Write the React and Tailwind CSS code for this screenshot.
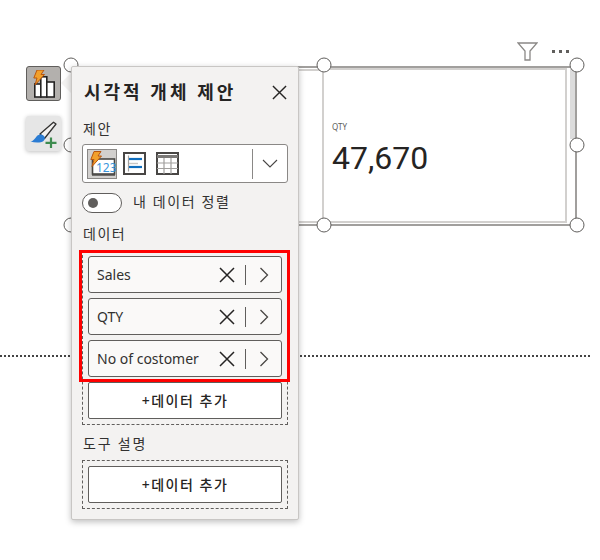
import React from "react";

const KR = { fontFamily: '"Noto Sans","Noto Sans CJK KR",sans-serif' };

function Bolt({ x = 0, y = 0 }) {
  return (
    <path
      transform={`translate(${x} ${y})`}
      d="M5 0.5H12L9 5H12.5L3 15.5L5 8.5H1.8Z"
      fill="#f2a02c"
      stroke="#b8560f"
      strokeWidth="1"
      strokeLinejoin="miter"
    />
  );
}

function BarsIcon() {
  return (
    <svg width="26" height="28" viewBox="0 0 26 28">
      <g fill="#fff" stroke="#252423" strokeWidth="1.6">
        <rect x="3.8" y="14" width="6" height="13" />
        <rect x="9.8" y="6.8" width="6" height="20.2" />
        <rect x="15.8" y="12" width="7.4" height="15" />
      </g>
      <Bolt x="1" y="-0.5" />
    </svg>
  );
}

function BrushIcon() {
  return (
    <svg width="30" height="30" viewBox="0 0 30 30">
      <path d="M11 15L24.5 3.2L27 5L15.5 19.5Z" fill="#f3f2f1" stroke="#323130" strokeWidth="1.3" strokeLinejoin="round" />
      <path d="M1.5 22.5C5 22 6 19 8 17C10 15 12.5 15 14.5 16.5C16.5 18 16 20.5 14.5 22C12 24 6 24 1.5 22.5Z" fill="#2b7cd3" />
      <path d="M22 18.5V29M16.5 23.8H27.5" stroke="#3d8b4f" strokeWidth="2.2" />
    </svg>
  );
}

function CardIcon() {
  return (
    <svg width="28" height="26" viewBox="0 0 28 26">
      <rect x="4.5" y="8" width="22" height="15" fill="#fff" stroke="#484644" strokeWidth="1.6" />
      <path d="M4 24H27" stroke="#484644" strokeWidth="1.4" />
      <text x="8" y="20.5" fontSize="12" fill="#3a96dd" fontFamily="Noto Sans, sans-serif">123</text>
      <Bolt x="1" y="0" />
    </svg>
  );
}

function SlicerIcon() {
  return (
    <svg width="23" height="23" viewBox="0 0 23 23">
      <rect x="1" y="1" width="21" height="21" fill="#fff" stroke="#484644" strokeWidth="2" />
      <path d="M5.5 3.5V19.5" stroke="#a19f9d" strokeWidth="1.2" />
      <path d="M6 7H19" stroke="#106ebe" strokeWidth="2.2" />
      <path d="M6 11.5H15" stroke="#c8c6c4" strokeWidth="1.4" />
      <path d="M6 15H19" stroke="#106ebe" strokeWidth="2.2" />
    </svg>
  );
}

function TableIcon() {
  return (
    <svg width="23" height="23" viewBox="0 0 23 23">
      <rect x="1" y="1" width="21" height="21" fill="#fff" stroke="#484644" strokeWidth="2" />
      <path d="M1 4.5H22" stroke="#7a7876" strokeWidth="3" />
      <path d="M1 11H22M1 16.5H22M8 6V22M15 6V22" stroke="#a19f9d" strokeWidth="1.2" />
    </svg>
  );
}

function Close({ size = 16, sw = 1.4 }) {
  return (
    <svg width={size} height={size} viewBox="0 0 16 16">
      <path d="M1 1L15 15M15 1L1 15" stroke="#252423" strokeWidth={sw} fill="none" />
    </svg>
  );
}

function DataRow({ label }) {
  return (
    <div className="h-[37px] rounded-[3px] border border-[#605e5c] bg-[#faf9f8] flex items-center pl-[8px] pr-[12px] text-[14px] text-[#323130]">
      <span className="flex-1">{label}</span>
      <Close size={16} sw={1.5} />
      <span className="w-px h-[20px] bg-[#605e5c] ml-[10px] mr-[13px]" />
      <svg width="10" height="16" viewBox="0 0 10 16">
        <path d="M1.5 1L8.5 8L1.5 15" stroke="#484644" strokeWidth="1.3" fill="none" />
      </svg>
    </div>
  );
}

function AddButton() {
  return (
    <div className="h-[37px] rounded-[2px] border border-[#605e5c] bg-white flex items-center justify-center text-[14px] font-medium tracking-[1.5px] text-[#252423]">
      +데이터 추가
    </div>
  );
}

function Handle({ x, y }) {
  return (
    <span
      className="absolute w-[15px] h-[15px] rounded-full bg-white border border-[#605e5c] -translate-x-1/2 -translate-y-1/2"
      style={{ left: x, top: y }}
    />
  );
}

export default function App() {
  return (
    <div className="relative w-[600px] h-[560px] bg-white overflow-hidden" style={KR}>
      {/* report divider */}
      <div className="absolute left-0 top-[355px] w-[590px] border-t-2 border-dotted border-[#444]" />

      {/* visual header */}
      <div className="absolute left-[517px] top-[42px] flex items-center gap-[14px]">
        <svg width="21" height="19" viewBox="0 0 21 19">
          <path d="M1 1H20L13 9V18H8V9Z" fill="#fff" stroke="#8a8886" strokeWidth="1.3" />
        </svg>
        <span className="flex gap-[4px]">
          <i className="w-[3px] h-[3px] bg-[#605e5c]" />
          <i className="w-[3px] h-[3px] bg-[#605e5c]" />
          <i className="w-[3px] h-[3px] bg-[#605e5c]" />
        </span>
      </div>

      {/* selected visual */}
      <div className="absolute left-[71px] top-[66px] w-[506px] h-[160px] border-2 border-[#a19f9d]" />
      <div className="absolute left-[71px] top-[69px] w-[252px] h-[154px] border-y-2 border-[#d2d0ce]" />
      <div className="absolute left-[322px] top-[68px] w-[245px] h-[155px] border-2 border-[#d2d0ce] bg-white flex flex-col justify-center pl-[8px] pt-[9px]">
        <div className="text-[8px] leading-[10px] text-[#605e5c] mb-[6px]">QTY</div>
        <div className="text-[32px] leading-[40px] text-[#252423]" style={{ fontFamily: "Roboto, sans-serif" }}>47,670</div>
      </div>
      <div className="absolute left-[570px] top-[69px] w-[5px] h-[70px] bg-[#dcdcdc]" />
      <Handle x={71} y={65} />
      <Handle x={324} y={65} />
      <Handle x={577} y={65} />
      <Handle x={71} y={145} />
      <Handle x={577} y={145} />
      <Handle x={71} y={225} />
      <Handle x={324} y={225} />
      <Handle x={577} y={225} />

      {/* side buttons */}
      <div className="absolute left-[26px] top-[66px] w-[35px] h-[35px] rounded-[3px] bg-[#b3b0ad] border border-[#605e5c] flex items-center justify-center">
        <BarsIcon />
      </div>
      <div className="absolute left-[26px] top-[116px] w-[35px] h-[35px] rounded-[3px] bg-[#e6e6e6] shadow-[0_1px_4px_rgba(0,0,0,0.25)] flex items-center justify-center">
        <BrushIcon />
      </div>

      {/* callout */}
      <div className="absolute left-[61px] top-[72px] w-0 h-0 border-y-[11px] border-y-transparent border-r-[11px] border-r-[#f3f2f1]" />
      <div className="absolute left-[71px] top-[66px] w-[228px] h-[454px] rounded-[2px] bg-[#f3f2f1] border border-[#c8c6c4] shadow-[0_2px_6px_rgba(0,0,0,0.25)] px-[10px] text-[#323130]">
        <div className="flex items-center justify-between h-[48px] pt-[2px] pl-[2px] pr-[1px]">
          <span className="text-[18px] font-bold tracking-[3px] text-[#252423]">시각적 개체 제안</span>
          <Close size={15} sw={1.5} />
        </div>
        <div className="text-[14px] leading-[20px] tracking-[1.5px] mt-[4px] mb-[5px] pl-[1px]">제안</div>
        <div className="h-[39px] rounded-[3px] border border-[#8a8886] bg-white flex items-center pl-[4px]">
          <span className="w-[30px] h-[30px] bg-[#d2d0ce] border border-[#8a8886] flex items-center justify-center">
            <CardIcon />
          </span>
          <span className="ml-[6px]"><SlicerIcon /></span>
          <span className="ml-[10px]"><TableIcon /></span>
          <span className="w-px h-[30px] bg-[#8a8886] ml-auto" />
          <span className="w-[34px] flex justify-center">
            <svg width="16" height="9" viewBox="0 0 16 9">
              <path d="M1 1L8 8L15 1" stroke="#484644" strokeWidth="1.1" fill="none" />
            </svg>
          </span>
        </div>
        <div className="flex items-center h-[20px] mt-[10px] text-[14px]">
          <span className="w-[40px] h-[20px] rounded-full border border-[#605e5c] bg-white flex items-center pl-[5px]">
            <i className="w-[10px] h-[10px] rounded-full bg-[#605e5c]" />
          </span>
          <span className="ml-[11px] tracking-[1.6px] leading-[18px] mb-[2px]">내 데이터 정렬</span>
        </div>
        <div className="text-[14px] leading-[20px] tracking-[1.5px] mt-[11px] mb-[6px] pl-[1px]">데이터</div>
        <div className="w-[206px] border border-dashed border-[#605e5c] p-[5px] flex flex-col gap-[5px]">
          <DataRow label="Sales" />
          <DataRow label="QTY" />
          <DataRow label="No of costomer" />
          <AddButton />
        </div>
        <div className="text-[14px] leading-[20px] tracking-[1.8px] mt-[9px] mb-[6px] pl-[1px]">도구 설명</div>
        <div className="w-[206px] border border-dashed border-[#605e5c] p-[5px]">
          <AddButton />
        </div>
      </div>

      {/* annotation */}
      <div className="absolute left-[79px] top-[250px] w-[211px] h-[132px] border-[3px] border-[#ff0000]" />
    </div>
  );
}
